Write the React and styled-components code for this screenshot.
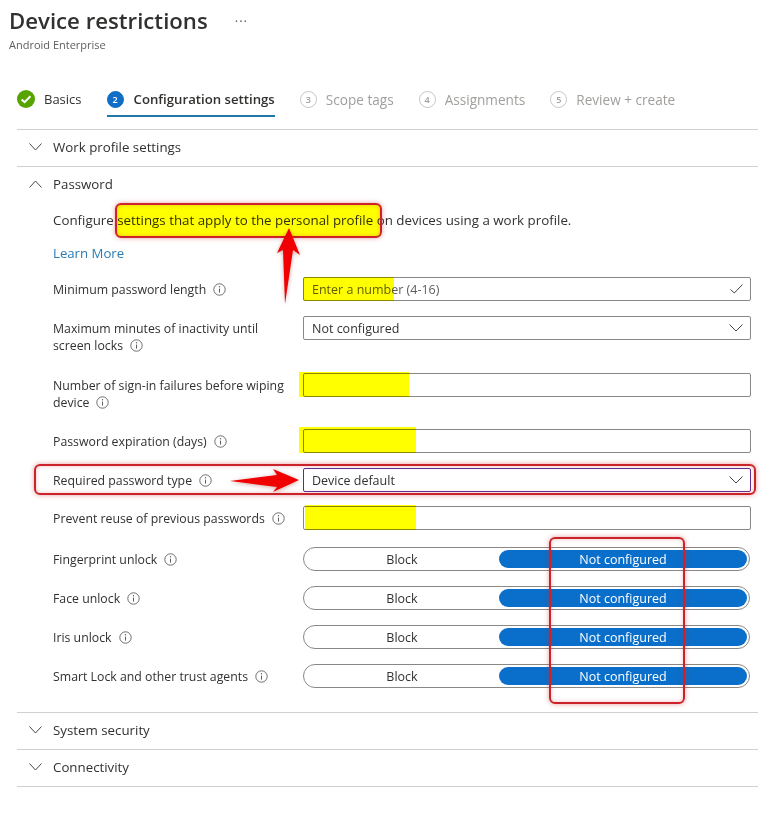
import React from 'react';
import styled, { createGlobalStyle } from 'styled-components';

const GlobalStyle = createGlobalStyle`
  html, body {
    margin: 0;
    background: #fff;
    font-family: "Open Sans", "Noto Sans", "Liberation Sans", sans-serif;
    color: #323130;
  }
  * { box-sizing: border-box; }
`;

const Page = styled.div`
  position: relative;
  width: 769px;
  height: 820px;
  overflow: hidden;
  padding: 7px 11px 0 17px;
`;
const Header = styled.header`
  margin-left: -8px;
`;
const TitleRow = styled.div`
  display: flex;
  align-items: center;
  gap: 27px;
  height: 28px;
`;
const Title = styled.h1`
  margin: 0;
  font-size: 22.2px;
  font-weight: 600;
  line-height: 28px;
  color: #323130;
`;
const More = styled.span`
  font-size: 13px;
  line-height: 10px;
  letter-spacing: 1px;
  color: #605e5c;
  margin-top: -8px;
`;
const Subtitle = styled.div`
  margin-top: 2px;
  font-size: 11px;
  line-height: 16px;
  color: #605e5c;
`;
const Tabs = styled.nav`
  display: flex;
  gap: 25px;
  margin-top: 30px;
  margin-bottom: 12px;
`;
const Tab = styled.div`
  display: flex;
  align-items: center;
  gap: ${({ $active }) => ($active ? 10 : 9)}px;
  height: 34px;
  font-size: ${({ $muted, $active }) => ($muted ? 13.6 : $active ? 13.2 : 13)}px;
  font-weight: ${({ $active }) => ($active ? 600 : 400)};
  color: ${({ $muted }) => ($muted ? '#a19f9d' : '#323130')};
  border-bottom: 2px solid ${({ $active }) => ($active ? '#1f78a8' : 'transparent')};
`;
const StepCircle = styled.span`
  display: flex;
  align-items: center;
  justify-content: center;
  width: 17px;
  height: 17px;
  border-radius: 50%;
  font-size: 9px;
  font-weight: 600;
  color: ${({ $active }) => ($active ? '#fff' : '#a19f9d')};
  background: ${({ $active }) => ($active ? '#0f6fc6' : '#fff')};
  border: 1px solid ${({ $active }) => ($active ? '#0f6fc6' : '#c8c6c4')};
`;
const Section = styled.section`
  border-top: 1px solid #d2d0ce;
  &:last-of-type { border-bottom: 1px solid #d2d0ce; }
`;
const SectionHead = styled.div`
  display: flex;
  align-items: center;
  gap: 11px;
  height: 36px;
  padding-left: 12px;
  padding-bottom: 2px;
  font-size: 13.3px;
`;
const SectionBody = styled.div`
  padding: 0 7px 24px 36px;
`;
const Description = styled.p`
  margin: 8px 0 0;
  font-size: 13.33px;
  line-height: 18px;
`;
const LearnMore = styled.a`
  display: block;
  margin-top: 15px;
  margin-bottom: 15px;
  font-size: 13.2px;
  line-height: 18px;
  color: #2b7cb3;
`;
const Row = styled.div`
  display: grid;
  grid-template-columns: 250px 448px;
  align-items: start;
  margin-bottom: ${({ $gap }) => $gap}px;
`;
const Label = styled.div`
  font-size: 12.3px;
  line-height: 17px;
  padding-top: 4px;
  padding-right: 12px;
  color: #323130;
  svg { margin-left: 7px; vertical-align: -2px; }
`;
const Field = styled.div`
  display: flex;
  align-items: center;
  justify-content: space-between;
  height: 24px;
  padding: 0 7px 0 8px;
  font-size: 12.5px;
  background: #fff;
  border: 1px solid ${({ $focus }) => ($focus ? '#5c2d91' : '#8a8886')};
  border-radius: 2px;
  color: ${({ $muted }) => ($muted ? '#605e5c' : '#323130')};
`;
const Toggle = styled.div`
  display: grid;
  grid-template-columns: 194px 248px;
  height: 24px;
  width: 447px;
  padding: 2px 1px;
  font-size: 12.5px;
  border: 1px solid #8a8886;
  border-radius: 12px;
`;
const ToggleOption = styled.div`
  display: flex;
  align-items: center;
  justify-content: center;
  border-radius: 10px;
  color: ${({ $on }) => ($on ? '#fff' : '#323130')};
  background: ${({ $on }) => ($on ? '#0a6fca' : 'transparent')};
`;
const Marks = styled.div`
  position: absolute;
  inset: 0;
  pointer-events: none;
`;
const Highlight = styled.div`
  position: absolute;
  left: ${({ $x }) => $x}px;
  top: ${({ $y }) => $y}px;
  width: ${({ $w }) => $w}px;
  height: ${({ $h }) => $h}px;
  background: #ffff00;
  mix-blend-mode: multiply;
`;
const RedBox = styled.div`
  position: absolute;
  left: ${({ $x }) => $x}px;
  top: ${({ $y }) => $y}px;
  width: ${({ $w }) => $w}px;
  height: ${({ $h }) => $h}px;
  border: 2px solid #cc2229;
  border-radius: 6px;
  box-shadow: 0 0 5px rgba(200, 40, 40, 0.45), inset 0 0 4px rgba(200, 40, 40, 0.3);
`;
const ArrowLayer = styled.svg`
  position: absolute;
  left: 0;
  top: 0;
  filter: drop-shadow(0 1px 2px rgba(120, 0, 0, 0.35));
`;

const Chevron = ({ up }) => (
  <svg width="13" height="8" viewBox="0 0 13 8" fill="none" stroke="#484644" strokeWidth="1">
    <path d={up ? 'M0.5 7.5 L6.5 1 L12.5 7.5' : 'M0.5 0.5 L6.5 7 L12.5 0.5'} />
  </svg>
);

const Info = () => (
  <svg width="13" height="13" viewBox="0 0 13 13" fill="none">
    <circle cx="6.5" cy="6.5" r="5.7" stroke="#605e5c" strokeWidth="0.9" />
    <path d="M6.5 5.6 V9.6" stroke="#605e5c" strokeWidth="1" />
    <circle cx="6.5" cy="3.8" r="0.7" fill="#605e5c" />
  </svg>
);

const FieldChevron = () => (
  <svg width="14" height="8" viewBox="0 0 14 8" fill="none" stroke="#484644" strokeWidth="1">
    <path d="M0.5 0.5 L7 7 L13.5 0.5" />
  </svg>
);

const FieldCheck = () => (
  <svg width="13" height="10" viewBox="0 0 13 10" fill="none" stroke="#484644" strokeWidth="1">
    <path d="M0.5 5.5 L4.3 9 L12.5 0.5" />
  </svg>
);

const DoneIcon = () => (
  <svg width="18" height="18" viewBox="0 0 18 18">
    <circle cx="9" cy="9" r="9" fill="#57a300" />
    <path d="M4.6 9.4 L7.6 12.2 L13.4 6.2" fill="none" stroke="#fff" strokeWidth="2" />
  </svg>
);

const steps = [
  { n: 3, label: 'Scope tags' },
  { n: 4, label: 'Assignments' },
  { n: 5, label: 'Review + create' },
];

const toggles = [
  { label: 'Fingerprint unlock', gap: 15 },
  { label: 'Face unlock', gap: 15 },
  { label: 'Iris unlock', gap: 15 },
  { label: 'Smart Lock and other trust agents', gap: 0 },
];

const App = () => (
  <Page>
    <GlobalStyle />
    <Header>
      <TitleRow>
        <Title>Device restrictions</Title>
        <More>...</More>
      </TitleRow>
      <Subtitle>Android Enterprise</Subtitle>
    </Header>

    <Tabs>
      <Tab>
        <DoneIcon />
        Basics
      </Tab>
      <Tab $active>
        <StepCircle $active>2</StepCircle>
        Configuration settings
      </Tab>
      {steps.map(s => (
        <Tab key={s.n} $muted>
          <StepCircle>{s.n}</StepCircle>
          {s.label}
        </Tab>
      ))}
    </Tabs>

    <Section>
      <SectionHead><Chevron />Work profile settings</SectionHead>
    </Section>
    <Section>
      <SectionHead><Chevron up />Password</SectionHead>
      <SectionBody>
        <Description>Configure settings that apply to the personal profile on devices using a work profile.</Description>
        <LearnMore>Learn More</LearnMore>
        <Row $gap={15}>
          <Label>Minimum password length<Info /></Label>
          <Field $muted>Enter a number (4-16)<FieldCheck /></Field>
        </Row>
        <Row $gap={19}>
          <Label>Maximum minutes of inactivity until screen locks<Info /></Label>
          <Field>Not configured<FieldChevron /></Field>
        </Row>
        <Row $gap={18}>
          <Label>Number of sign-in failures before wiping device<Info /></Label>
          <Field />
        </Row>
        <Row $gap={15}>
          <Label>Password expiration (days)<Info /></Label>
          <Field />
        </Row>
        <Row $gap={14}>
          <Label>Required password type<Info /></Label>
          <Field $focus>Device default<FieldChevron /></Field>
        </Row>
        <Row $gap={17}>
          <Label>Prevent reuse of previous passwords<Info /></Label>
          <Field />
        </Row>
        {toggles.map(t => (
          <Row key={t.label} $gap={t.gap}>
            <Label>{t.label}<Info /></Label>
            <Toggle>
              <ToggleOption>Block</ToggleOption>
              <ToggleOption $on>Not configured</ToggleOption>
            </Toggle>
          </Row>
        ))}
      </SectionBody>
    </Section>
    <Section>
      <SectionHead><Chevron />System security</SectionHead>
    </Section>
    <Section>
      <SectionHead><Chevron />Connectivity</SectionHead>
    </Section>

    {/* annotations drawn on top of the screenshot */}
    <Marks>
      <Highlight $x={117} $y={205} $w={264} $h={31} />
      <Highlight $x={303} $y={277} $w={91} $h={24} />
      <Highlight $x={299} $y={372} $w={110} $h={25} />
      <Highlight $x={299} $y={427} $w={117} $h={26} />
      <Highlight $x={305} $y={505} $w={111} $h={25} />
      <RedBox $x={115} $y={203} $w={267} $h={35} />
      <RedBox $x={34} $y={464} $w={722} $h={31} />
      <RedBox $x={549} $y={537} $w={136} $h={167} />
      <ArrowLayer width="769" height="820" viewBox="0 0 769 820">
        <polygon points="289,228 300,255 293,250 285,304 283,250 277,253" fill="#f00000" />
        <polygon points="299,480 273,469 277,475 230,481 277,487 273,492" fill="#f00000" />
      </ArrowLayer>
    </Marks>
  </Page>
);

export default App;
